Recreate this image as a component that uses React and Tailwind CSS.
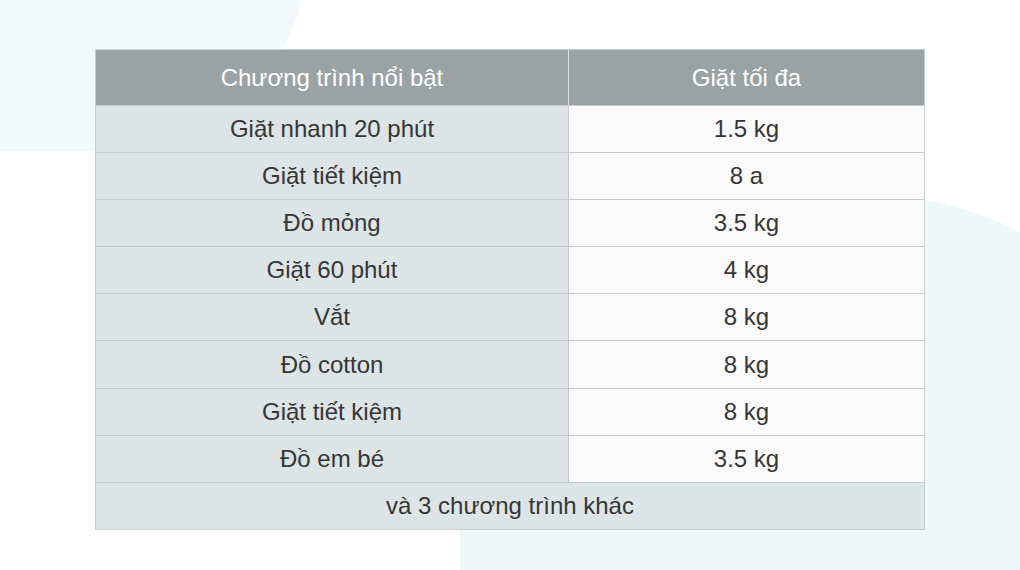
import React from "react";

const rows = [
  ["Giặt nhanh 20 phút", "1.5 kg"],
  ["Giặt tiết kiệm", "8 a"],
  ["Đồ mỏng", "3.5 kg"],
  ["Giặt 60 phút", "4 kg"],
  ["Vắt", "8 kg"],
  ["Đồ cotton", "8 kg"],
  ["Giặt tiết kiệm", "8 kg"],
  ["Đồ em bé", "3.5 kg"],
];

export default function App() {
  return (
    <div
      className="relative w-[1020px] h-[570px] overflow-hidden bg-white"
      style={{ fontFamily: '"Liberation Sans", Arial, sans-serif' }}
    >
      <div className="absolute left-[-200px] top-[-300px] w-[508px] h-[451px] rounded-br-[200px] bg-[#f2f9fa]" />
      <div className="absolute left-[460px] top-[196px] w-[716px] h-[380px] rounded-tr-[300px] rounded-bl-[8px] bg-[#edf8f9]" />

      <div className="relative pt-[49px] pl-[95px]">
        <div className="w-[830px] border border-[#c9cfd1] text-[24px] text-[#363636]">
          <div className="flex h-[55px] bg-[#9aa2a4] text-white">
            <div className="w-[473px] flex items-center justify-center border-r border-[#d8dcdd]">
              Chương trình nổi bật
            </div>
            <div className="flex-1 flex items-center justify-center">Giặt tối đa</div>
          </div>
          {rows.map(([a, b], i) => (
            <div key={i} className="flex h-[47.1px] border-t border-[#c5cbcd]">
              <div className="w-[473px] flex items-center justify-center bg-[#dce4e5] border-r border-[#c5cbcd]">
                {a}
              </div>
              <div className="flex-1 flex items-center justify-center bg-[#fafafa]">{b}</div>
            </div>
          ))}
          <div className="flex h-[47.5px] items-center justify-center bg-[#dce4e5] border-t border-[#c5cbcd]">
            và 3 chương trình khác
          </div>
        </div>
      </div>
    </div>
  );
}
